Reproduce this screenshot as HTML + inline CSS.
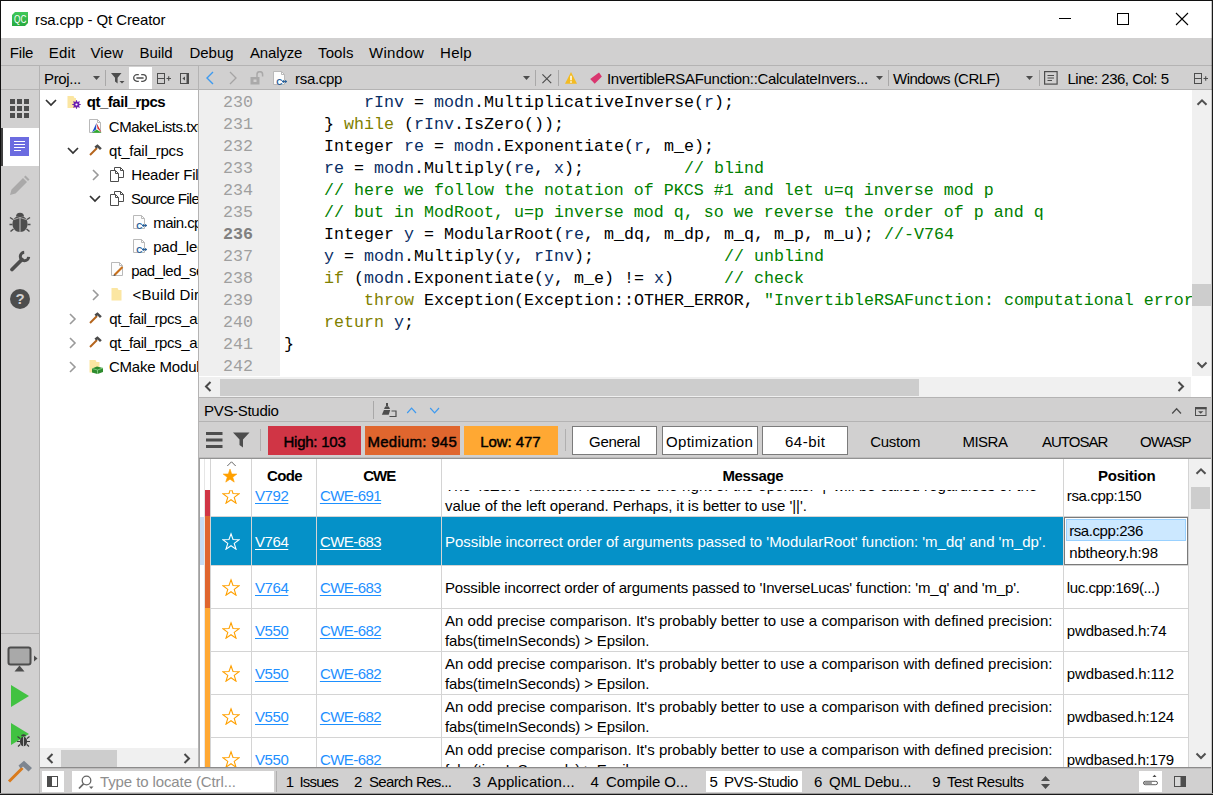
<!DOCTYPE html>
<html lang="en"><head><meta charset="utf-8"><title>rsa.cpp - Qt Creator</title>
<style>
html,body{margin:0;padding:0;}
body{width:1213px;height:795px;overflow:hidden;background:#fff;position:relative;font-family:"Liberation Sans",sans-serif;}
#r{position:absolute;left:0;top:0;width:1213px;height:795px;overflow:hidden;}
#r div,#r span,#r svg{position:absolute;}
.t{white-space:pre;line-height:20px;height:20px;}
.m{font-family:"Liberation Mono",monospace;}
.c{overflow:hidden;}
</style></head>
<body><div id="r">
<div style="left:0px;top:0px;width:1213px;height:795px;background:#fff;"></div>
<svg style="left:12px;top:12px;" width="16" height="14" viewBox="0 0 16 14"><defs><linearGradient id="qg" x1="0" y1="0" x2="0" y2="1"><stop offset="0" stop-color="#41c85a"/><stop offset="1" stop-color="#27aa40"/></linearGradient></defs><path d="M3 0H16V11L13 14H0V3Z" fill="url(#qg)"/><text x="8.2" y="10.7" font-family="Liberation Sans, sans-serif" font-size="10" fill="#fff" text-anchor="middle" textLength="12.3" lengthAdjust="spacingAndGlyphs">QC</text></svg>
<span class="t" style="left:35.0px;top:9.80px;font-size:15px;color:#000;letter-spacing:-0.102px;">rsa.cpp - Qt Creator</span>
<div style="left:1059px;top:18px;width:12px;height:1px;background:#000;"></div>
<div style="left:1117px;top:13px;width:12px;height:12px;background:transparent;border:1px solid #000;box-sizing:border-box;"></div>
<svg style="left:1175px;top:12px;" width="14" height="14" viewBox="0 0 14 14"><path d="M1 1L13 13M13 1L1 13" stroke="#000" stroke-width="1.1" fill="none"/></svg>
<div style="left:1px;top:38px;width:1211px;height:28px;background:#d1d0d0;"></div>
<div style="left:1px;top:65px;width:1211px;height:1px;background:#b4b3b3;"></div>
<span class="t" style="left:9.8px;top:42.80px;font-size:15px;color:#000;letter-spacing:-0.193px;">File</span>
<span class="t" style="left:48.8px;top:42.80px;font-size:15px;color:#000;letter-spacing:0.135px;">Edit</span>
<span class="t" style="left:90.5px;top:42.80px;font-size:15px;color:#000;letter-spacing:0.113px;">View</span>
<span class="t" style="left:139.5px;top:42.80px;font-size:15px;color:#000;letter-spacing:-0.072px;">Build</span>
<span class="t" style="left:189.5px;top:42.80px;font-size:15px;color:#000;letter-spacing:-0.041px;">Debug</span>
<span class="t" style="left:250.0px;top:42.80px;font-size:15px;color:#000;letter-spacing:-0.154px;">Analyze</span>
<span class="t" style="left:318.1px;top:42.80px;font-size:15px;color:#000;letter-spacing:0.074px;">Tools</span>
<span class="t" style="left:368.9px;top:42.80px;font-size:15px;color:#000;letter-spacing:0.340px;">Window</span>
<span class="t" style="left:440.1px;top:42.80px;font-size:15px;color:#000;letter-spacing:0.210px;">Help</span>
<div style="left:1px;top:66px;width:1211px;height:24px;background:#d1d0d0;"></div>
<div style="left:1px;top:89px;width:1211px;height:1px;background:#b4b3b3;"></div>
<div style="left:1px;top:90px;width:38px;height:704px;background:#d1d0d0;"></div>
<div style="left:39px;top:66px;width:1px;height:728px;background:#b4b3b3;"></div>
<svg style="left:10px;top:99px;" width="19" height="19" viewBox="0 0 19 19"><rect x="0" y="0" width="5" height="5" fill="#4d4d4d"/><rect x="0" y="7" width="5" height="5" fill="#4d4d4d"/><rect x="0" y="14" width="5" height="5" fill="#4d4d4d"/><rect x="7" y="0" width="5" height="5" fill="#4d4d4d"/><rect x="7" y="7" width="5" height="5" fill="#4d4d4d"/><rect x="7" y="14" width="5" height="5" fill="#4d4d4d"/><rect x="14" y="0" width="5" height="5" fill="#4d4d4d"/><rect x="14" y="7" width="5" height="5" fill="#4d4d4d"/><rect x="14" y="14" width="5" height="5" fill="#4d4d4d"/></svg>
<div style="left:1px;top:128px;width:38px;height:38px;background:#fff;"></div>
<div style="left:1px;top:128px;width:2px;height:38px;background:#404040;"></div>
<svg style="left:10px;top:137px;" width="19" height="19" viewBox="0 0 19 19"><rect width="19" height="19" fill="#6c6ce0"/><path d="M4 4.5H15M4 7.5H15M4 10.5H15M4 13.5H11" stroke="#fff" stroke-width="1.1"/></svg>
<svg style="left:9px;top:175px;" width="21" height="21" viewBox="0 0 21 21"><path d="M1 20L2.5 14.5L14 3L18 7L6.5 18.5Z M15 2L16.5 0.5L20.5 4.5L19 6Z" fill="#aaa9a9"/></svg>
<svg style="left:9px;top:212px;" width="22" height="22" viewBox="0 0 22 22"><path d="M4 7.500L1 5.500M18 7.500L21 5.500M3.500 12.500H0.500M18.500 12.500H21.500M4.500 17L1.500 19.500M17.500 17L20.500 19.500" stroke="#4d4d4d" stroke-width="1.500" fill="none"/><g fill="#4d4d4d"><path d="M11 4C16.500 4 18.500 8 18.500 12C18.500 16.500 15.500 20 11 20C6.500 20 3.500 16.500 3.500 12C3.500 8 5.500 4 11 4Z"/><path d="M7 4.500a4 3.800 0 0 1 8 0z"/></g><path d="M11 5.500V20" stroke="#d1d0d0" stroke-width="0.900"/><path d="M11 5.500L5 7.500M11 5.500L17 7.500" stroke="#d1d0d0" stroke-width="0.700"/></svg>
<svg style="left:9px;top:250px;" width="22" height="22" viewBox="0 0 22 22"><path d="M3 19.500L13 9.500" stroke="#4d4d4d" stroke-width="3.700" stroke-linecap="round" fill="none"/><path d="M19.700 6.800A4.200 4.200 0 1 1 15.200 2.300" stroke="#4d4d4d" stroke-width="3" fill="none"/></svg>
<svg style="left:10px;top:289px;" width="20" height="20" viewBox="0 0 20 20"><circle cx="10" cy="10" r="10" fill="#4d4d4d"/><text x="10" y="15.2" font-family="Liberation Sans, sans-serif" font-weight="700" font-size="15" fill="#d1d0d0" text-anchor="middle">?</text></svg>
<div style="left:1px;top:633px;width:38px;height:1px;background:#b4b3b3;"></div>
<svg style="left:7px;top:646px;" width="32" height="27" viewBox="0 0 32 27"><rect x="1.5" y="1.5" width="22" height="17" rx="2" fill="#a9a9a9" stroke="#4d4d4d" stroke-width="2"/><path d="M7.500 25.500L12.500 19.500L17.500 25.500Z" fill="#4d4d4d"/><path d="M27 9.500L30.500 12.500L27 15.500Z" fill="#4d4d4d"/></svg>
<svg style="left:11px;top:685px;" width="18" height="22" viewBox="0 0 18 22"><path d="M0 0L18 11L0 22Z" fill="#41c241"/></svg>
<svg style="left:11px;top:723px;" width="20" height="24" viewBox="0 0 20 24"><path d="M0 0L18 11L0 22Z" fill="#41c241"/><g fill="#3c3c3c"><ellipse cx="12.500" cy="18.500" rx="3.600" ry="4.800"/><path d="M10 13.200a2.500 2 0 0 1 5 0z"/></g><path d="M12.500 14V23.500" stroke="#d1d0d0" stroke-width="0.8"/><path d="M9 15.500L6.500 13.500M16 15.500L18.500 13.500M9 18.500H6M16 18.500H19M9.200 21.500L7 23.500M15.800 21.500L18 23.500" stroke="#3c3c3c" stroke-width="1.1" fill="none"/></svg>
<svg style="left:7px;top:760px;" width="26" height="24" viewBox="0 0 26 24"><path d="M2 21.500L15.500 8" stroke="#d97a1c" stroke-width="3"/><path d="M11.500 5.500L17 0.800L25 8L21.500 11.500L16 6.500L13.500 8.500Z" fill="#7d8590"/></svg>
<span class="t" style="left:44.0px;top:68.80px;font-size:15px;color:#000;letter-spacing:-0.327px;">Proj...</span>
<svg style="left:93px;top:76px;" width="7" height="4" viewBox="0 0 7 4"><path d="M0 0H7L3.500 4Z" fill="#4d4d4d"/></svg>
<div style="left:105px;top:70px;width:1px;height:16px;background:#a9a8a8;"></div>
<svg style="left:110.5px;top:73px;" width="14" height="11" viewBox="0 0 14 11"><path d="M0 0H10.500L6.600 4.800V10.500L4 8.500V4.800Z" fill="#4d4d4d"/><path d="M8.500 8H13.500L11 10.500Z" fill="#4d4d4d"/></svg>
<div style="left:129px;top:67px;width:23px;height:22px;background:#fff;"></div>
<svg style="left:133px;top:74px;" width="14" height="8" viewBox="0 0 14 8"><path d="M5.800 0.700H4a3.300 3.300 0 0 0 0 6.600H5.800M8.200 0.700H10a3.300 3.300 0 0 1 0 6.600H8.200" stroke="#4d4d4d" stroke-width="1.300" fill="none"/><path d="M3.400 4H10.600" stroke="#4d4d4d" stroke-width="1.500"/></svg>
<svg style="left:157px;top:73px;" width="15" height="11" viewBox="0 0 15 11"><rect x="0.500" y="0.500" width="7" height="10" fill="none" stroke="#4d4d4d"/><path d="M0.500 5.500H7.500" stroke="#4d4d4d"/><path d="M9.500 5.500H14M11.700 3.200V7.800" stroke="#4d4d4d" stroke-width="1.100"/></svg>
<svg style="left:180px;top:73px;" width="9" height="11" viewBox="0 0 9 11"><rect x="0.500" y="0.500" width="8" height="10" fill="none" stroke="#4d4d4d"/><rect x="6.500" y="0" width="2.500" height="11" fill="#4d4d4d"/><path d="M5 3.500V7.500L2.400 5.500Z" fill="#4d4d4d"/></svg>
<div style="left:40px;top:90px;width:158px;height:658px;background:#fff;"></div>
<div style="left:198px;top:66px;width:1px;height:702px;background:#b4b3b3;"></div>
<svg style="left:44.5px;top:99px;" width="12" height="8" viewBox="0 0 12 8"><path d="M1 1L6 6L11 1" stroke="#333" stroke-width="1.7" fill="none"/></svg>
<svg style="left:67px;top:95px;" width="14" height="14" viewBox="0 0 14 14"><path d="M0.500 1H6.500L7.500 3H9V13H0.500Z" fill="#fbe6a2"/><circle cx="9.500" cy="9.500" r="2.300" fill="none" stroke="#6a1fb0" stroke-width="1.300"/><path d="M9.500 5.300V13.700M5.300 9.500H13.700M6.500 6.500L12.500 12.500M12.500 6.500L6.500 12.500" stroke="#6a1fb0" stroke-width="1.1"/><circle cx="9.500" cy="9.500" r="1.100" fill="#fff"/></svg>
<span class="t" style="left:86.8px;top:92.30px;font-size:15px;color:#000;font-weight:700;letter-spacing:-0.484px;">qt_fail_rpcs</span>
<svg style="left:89px;top:119px;" width="14" height="15" viewBox="0 0 14 15"><path d="M0.500 0.500H8.500L11.500 3.500V13.500H0.500Z" fill="#fdfdfd" stroke="#b9b9b9"/><path d="M8.500 0.500V3.500H11.500" fill="none" stroke="#b9b9b9"/><path d="M7.500 4L3 13.500L7 10.500Z" fill="#1f4fc9"/><path d="M7.500 4L12.500 13.500L8.500 9.500Z" fill="#d62b2b"/><path d="M3 13.800H12.500L7.800 10.500Z" fill="#2faa2f"/></svg>
<div class="c" style="left:100px;top:115px;width:97.5px;height:24px">
<span class="t" style="left:8.8px;top:1.70px;font-size:15px;color:#000;letter-spacing:-0.462px;">CMakeLists.txt</span>
</div>
<svg style="left:66.5px;top:146.5px;" width="12" height="8" viewBox="0 0 12 8"><path d="M1 1L6 6L11 1" stroke="#333" stroke-width="1.7" fill="none"/></svg>
<svg style="left:89px;top:144px;" width="13" height="12" viewBox="0 0 13 12"><path d="M1 11L8 4" stroke="#b5651d" stroke-width="2"/><path d="M5.500 2.500L8.500 0.300L12.800 4.200L11 6L8.500 3.500L7 4.500Z" fill="#4a4a4a"/></svg>
<span class="t" style="left:109.1px;top:140.80px;font-size:15px;color:#000;letter-spacing:-0.218px;">qt_fail_rpcs</span>
<svg style="left:91.5px;top:168.5px;" width="8" height="12" viewBox="0 0 8 12"><path d="M1 1L6 6L1 11" stroke="#9a9a9a" stroke-width="1.6" fill="none"/></svg>
<svg style="left:110px;top:167px;" width="14" height="15" viewBox="0 0 14 15"><path d="M4.500 3.500V0.500H10.500L13.500 3.500V10.500H8.500" fill="#fff" stroke="#4d4d4d"/><path d="M10.500 0.500V3.500H13.500" fill="none" stroke="#4d4d4d"/><path d="M0.500 3.500H5.500L8.500 6.500V14.500H0.500Z" fill="#fff" stroke="#4d4d4d"/><path d="M5.500 3.500V6.500H8.500" fill="none" stroke="#4d4d4d"/></svg>
<div class="c" style="left:125px;top:163px;width:72.5px;height:24px">
<span class="t" style="left:6.3px;top:1.90px;font-size:15px;color:#000;letter-spacing:-0.200px;">Header Files</span>
</div>
<svg style="left:89px;top:194.5px;" width="12" height="8" viewBox="0 0 12 8"><path d="M1 1L6 6L11 1" stroke="#333" stroke-width="1.7" fill="none"/></svg>
<svg style="left:110px;top:191px;" width="14" height="15" viewBox="0 0 14 15"><path d="M4.500 3.500V0.500H10.500L13.500 3.500V10.500H8.500" fill="#fff" stroke="#4d4d4d"/><path d="M10.500 0.500V3.500H13.500" fill="none" stroke="#4d4d4d"/><path d="M0.500 3.500H5.500L8.500 6.500V14.500H0.500Z" fill="#fff" stroke="#4d4d4d"/><path d="M5.500 3.500V6.500H8.500" fill="none" stroke="#4d4d4d"/></svg>
<div class="c" style="left:125px;top:187px;width:72.5px;height:24px">
<span class="t" style="left:5.9px;top:1.90px;font-size:15px;color:#000;letter-spacing:-0.693px;">Source Files</span>
</div>
<svg style="left:133px;top:215px;" width="14" height="15" viewBox="0 0 14 15"><path d="M0.500 0.500H8.500L11.500 3.500V13.500H0.500Z" fill="#fdfdfd" stroke="#b9b9b9"/><path d="M8.500 0.500V3.500H11.500" fill="none" stroke="#b9b9b9"/><text x="3.200" y="13.500" font-family="Liberation Sans, sans-serif" font-weight="700" font-size="8.500" fill="#2a6099">C</text><path d="M9 10.500H14M10.300 9V12M12.700 9V12" stroke="#2a6099" stroke-width="1"/></svg>
<div class="c" style="left:148px;top:211px;width:49.5px;height:24px">
<span class="t" style="left:5.2px;top:1.90px;font-size:15px;color:#000;letter-spacing:-0.548px;">main.cpp</span>
</div>
<svg style="left:133px;top:239px;" width="14" height="15" viewBox="0 0 14 15"><path d="M0.500 0.500H8.500L11.500 3.500V13.500H0.500Z" fill="#fdfdfd" stroke="#b9b9b9"/><path d="M8.500 0.500V3.500H11.500" fill="none" stroke="#b9b9b9"/><text x="3.200" y="13.500" font-family="Liberation Sans, sans-serif" font-weight="700" font-size="8.500" fill="#2a6099">C</text><path d="M9 10.500H14M10.300 9V12M12.700 9V12" stroke="#2a6099" stroke-width="1"/></svg>
<div class="c" style="left:148px;top:235px;width:49.5px;height:24px">
<span class="t" style="left:5.2px;top:1.70px;font-size:15px;color:#000;letter-spacing:-0.181px;">pad_led.cpp</span>
</div>
<svg style="left:111px;top:262px;" width="14" height="16" viewBox="0 0 14 16"><path d="M0.500 0.500H8.500L11.500 3.500V13.500H0.500Z" fill="#fdfdfd" stroke="#b9b9b9"/><path d="M8.500 0.500V3.500H11.500" fill="none" stroke="#b9b9b9"/><path d="M3.500 13L11.500 5" stroke="#c8701c" stroke-width="2.200"/><path d="M2.500 14L3 12L4.500 13.500Z" fill="#4d4d4d"/></svg>
<div class="c" style="left:125px;top:259px;width:72.5px;height:24px">
<span class="t" style="left:6.2px;top:1.70px;font-size:15px;color:#000;letter-spacing:-0.504px;">pad_led_sensor.ui</span>
</div>
<svg style="left:91.5px;top:288.5px;" width="8" height="12" viewBox="0 0 8 12"><path d="M1 1L6 6L1 11" stroke="#9a9a9a" stroke-width="1.6" fill="none"/></svg>
<svg style="left:111px;top:287px;" width="11" height="14" viewBox="0 0 11 14"><path d="M0.500 1H6.500L7.500 3H10.500V13.500H0.500Z" fill="#fbe6a2"/></svg>
<div class="c" style="left:125px;top:283px;width:72.5px;height:24px">
<span class="t" style="left:7.5px;top:1.90px;font-size:15px;color:#000;letter-spacing:0.116px;">&lt;Build Directory&gt;</span>
</div>
<svg style="left:69px;top:312.5px;" width="8" height="12" viewBox="0 0 8 12"><path d="M1 1L6 6L1 11" stroke="#9a9a9a" stroke-width="1.6" fill="none"/></svg>
<svg style="left:89px;top:312px;" width="13" height="12" viewBox="0 0 13 12"><path d="M1 11L8 4" stroke="#b5651d" stroke-width="2"/><path d="M5.500 2.500L8.500 0.300L12.800 4.200L11 6L8.500 3.500L7 4.500Z" fill="#4a4a4a"/></svg>
<div class="c" style="left:100px;top:307px;width:97.5px;height:24px">
<span class="t" style="left:9.3px;top:1.90px;font-size:15px;color:#000;letter-spacing:-0.397px;">qt_fail_rpcs_autogen</span>
</div>
<svg style="left:69px;top:336.5px;" width="8" height="12" viewBox="0 0 8 12"><path d="M1 1L6 6L1 11" stroke="#9a9a9a" stroke-width="1.6" fill="none"/></svg>
<svg style="left:89px;top:336px;" width="13" height="12" viewBox="0 0 13 12"><path d="M1 11L8 4" stroke="#b5651d" stroke-width="2"/><path d="M5.500 2.500L8.500 0.300L12.800 4.200L11 6L8.500 3.500L7 4.500Z" fill="#4a4a4a"/></svg>
<div class="c" style="left:100px;top:331px;width:97.5px;height:24px">
<span class="t" style="left:9.3px;top:1.90px;font-size:15px;color:#000;letter-spacing:-0.397px;">qt_fail_rpcs_autogen</span>
</div>
<svg style="left:69px;top:360.5px;" width="8" height="12" viewBox="0 0 8 12"><path d="M1 1L6 6L1 11" stroke="#9a9a9a" stroke-width="1.6" fill="none"/></svg>
<svg style="left:89px;top:359px;" width="15" height="15" viewBox="0 0 15 15"><path d="M0.500 1H6.500L7.500 3H10.500V13.500H0.500Z" fill="#fbe6a2"/><path d="M3 9.500L8 7.500L14 9V13L8.500 15L3 13.500Z" fill="#2e8b2e"/><path d="M3 9.500L8.500 11L14 9M8.500 11V15" stroke="#8fd68f" stroke-width="0.800" fill="none"/></svg>
<div class="c" style="left:100px;top:355px;width:97.5px;height:24px">
<span class="t" style="left:8.9px;top:1.90px;font-size:15px;color:#000;letter-spacing:-0.180px;">CMake Modules</span>
</div>
<div style="left:40px;top:748px;width:158px;height:20px;background:#f0f0f0;"></div>
<div style="left:61px;top:750px;width:56px;height:17px;background:#cdcdcd;"></div>
<svg style="left:46px;top:752.5px;" width="8" height="11" viewBox="0 0 8 11"><path d="M6.500 1L2 5.500L6.500 10" stroke="#484848" stroke-width="2" fill="none"/></svg>
<svg style="left:183px;top:752.5px;" width="8" height="11" viewBox="0 0 8 11"><path d="M1.500 1L6 5.500L1.500 10" stroke="#484848" stroke-width="2" fill="none"/></svg>
<svg style="left:205px;top:71px;" width="10" height="14" viewBox="0 0 10 14"><path d="M8 1L2 7L8 13" stroke="#3d9af0" stroke-width="1.400" fill="none"/></svg>
<svg style="left:228px;top:71px;" width="10" height="14" viewBox="0 0 10 14"><path d="M2 1L8 7L2 13" stroke="#a5a4a4" stroke-width="1.300" fill="none"/></svg>
<svg style="left:250px;top:71px;" width="14" height="14" viewBox="0 0 14 14"><rect x="0.500" y="6" width="9" height="7.500" fill="#aaa9a9"/><rect x="3.500" y="8.500" width="3" height="2.500" fill="#d1d0d0"/><path d="M7 6V3.500a2.800 2.800 0 0 1 5.600 0V5.500" stroke="#aaa9a9" stroke-width="1.500" fill="none"/></svg>
<svg style="left:273px;top:71px;" width="14" height="15" viewBox="0 0 14 15"><path d="M0.500 0.500H8.500L11.500 3.500V13.500H0.500Z" fill="#fdfdfd" stroke="#b9b9b9"/><path d="M8.500 0.500V3.500H11.500" fill="none" stroke="#b9b9b9"/><text x="3.200" y="13.500" font-family="Liberation Sans, sans-serif" font-weight="700" font-size="8.500" fill="#2a6099">C</text><path d="M9 10.500H14M10.300 9V12M12.700 9V12" stroke="#2a6099" stroke-width="1"/></svg>
<span class="t" style="left:295.1px;top:68.80px;font-size:15px;color:#000;letter-spacing:-0.343px;">rsa.cpp</span>
<svg style="left:523px;top:76px;" width="7" height="4" viewBox="0 0 7 4"><path d="M0 0H7L3.500 4Z" fill="#4d4d4d"/></svg>
<div style="left:535px;top:70px;width:1px;height:16px;background:#a9a8a8;"></div>
<svg style="left:542px;top:73.5px;" width="10" height="10" viewBox="0 0 10 10"><path d="M0.400 0.400L9.200 9.200M9.200 0.400L0.400 9.200" stroke="#4d4d4d" stroke-width="1.200" fill="none"/></svg>
<div style="left:558px;top:70px;width:1px;height:16px;background:#a9a8a8;"></div>
<svg style="left:564.8px;top:72px;" width="12" height="12" viewBox="0 0 12 12"><path d="M6 0L12 11.700H0Z" fill="#f3bb22"/><path d="M6 3.800V8.200M6 9.200V10.700" stroke="#fff" stroke-width="1.500"/></svg>
<svg style="left:590px;top:72px;" width="13" height="12" viewBox="0 0 13 12"><path d="M9 0.400L11.900 4.500L4.700 11.700L0.200 7Z" fill="#d9366f"/></svg>
<span class="t" style="left:607.0px;top:68.80px;font-size:15px;color:#000;letter-spacing:-0.307px;">InvertibleRSAFunction::CalculateInvers...</span>
<svg style="left:876px;top:76px;" width="7" height="4" viewBox="0 0 7 4"><path d="M0 0H7L3.500 4Z" fill="#4d4d4d"/></svg>
<div style="left:888px;top:70px;width:1px;height:16px;background:#a9a8a8;"></div>
<span class="t" style="left:893.1px;top:68.80px;font-size:15px;color:#000;letter-spacing:-0.556px;">Windows (CRLF)</span>
<svg style="left:1026px;top:76px;" width="7" height="4" viewBox="0 0 7 4"><path d="M0 0H7L3.500 4Z" fill="#4d4d4d"/></svg>
<div style="left:1039px;top:70px;width:1px;height:16px;background:#a9a8a8;"></div>
<svg style="left:1044px;top:71px;" width="14" height="14" viewBox="0 0 14 14"><rect x="0.600" y="0.600" width="12.500" height="12.500" fill="none" stroke="#4d4d4d" stroke-width="1.200"/><path d="M3.500 4.500H10M3.500 7H10M3.500 9.500H8" stroke="#4d4d4d" stroke-width="1"/></svg>
<span class="t" style="left:1067.5px;top:68.80px;font-size:15px;color:#000;letter-spacing:-0.485px;">Line: 236, Col: 5</span>
<svg style="left:1194px;top:73px;" width="15" height="11" viewBox="0 0 15 11"><rect x="0.500" y="0.500" width="7" height="10" fill="none" stroke="#4d4d4d"/><path d="M0.500 5.500H7.500" stroke="#4d4d4d"/><path d="M9.500 5.500H14M11.700 3.200V7.800" stroke="#4d4d4d" stroke-width="1.100"/></svg>
<div style="left:199px;top:90px;width:81px;height:286px;background:#efefef;"></div>
<div style="left:280px;top:90px;width:913px;height:286px;background:#fff;"></div>
<div class="c" style="left:199px;top:90px;width:994px;height:286px">
<span class="t m" style="left:24px;top:3px;font-size:16.667px;color:#9f9f9f;">230</span>
<span class="t m" style="left:165px;top:3px;font-size:16.667px;color:#092e64;">rInv</span>
<span class="t m" style="left:215px;top:3px;font-size:16.667px;color:#000;">= </span>
<span class="t m" style="left:235px;top:3px;font-size:16.667px;color:#092e64;">modn</span>
<span class="t m" style="left:275px;top:3px;font-size:16.667px;color:#000;">.MultiplicativeInverse(</span>
<span class="t m" style="left:505px;top:3px;font-size:16.667px;color:#092e64;">r</span>
<span class="t m" style="left:515px;top:3px;font-size:16.667px;color:#000;">);</span>
<span class="t m" style="left:24px;top:25px;font-size:16.667px;color:#9f9f9f;">231</span>
<span class="t m" style="left:125px;top:25px;font-size:16.667px;color:#000;">} </span>
<span class="t m" style="left:145px;top:25px;font-size:16.667px;color:#808000;">while</span>
<span class="t m" style="left:205px;top:25px;font-size:16.667px;color:#000;">(</span>
<span class="t m" style="left:215px;top:25px;font-size:16.667px;color:#092e64;">rInv</span>
<span class="t m" style="left:255px;top:25px;font-size:16.667px;color:#000;">.IsZero());</span>
<span class="t m" style="left:24px;top:47px;font-size:16.667px;color:#9f9f9f;">232</span>
<span class="t m" style="left:125px;top:47px;font-size:16.667px;color:#000;">Integer </span>
<span class="t m" style="left:205px;top:47px;font-size:16.667px;color:#092e64;">re</span>
<span class="t m" style="left:235px;top:47px;font-size:16.667px;color:#000;">= </span>
<span class="t m" style="left:255px;top:47px;font-size:16.667px;color:#092e64;">modn</span>
<span class="t m" style="left:295px;top:47px;font-size:16.667px;color:#000;">.Exponentiate(</span>
<span class="t m" style="left:435px;top:47px;font-size:16.667px;color:#092e64;">r</span>
<span class="t m" style="left:445px;top:47px;font-size:16.667px;color:#000;">, m_e);</span>
<span class="t m" style="left:24px;top:69px;font-size:16.667px;color:#9f9f9f;">233</span>
<span class="t m" style="left:125px;top:69px;font-size:16.667px;color:#092e64;">re</span>
<span class="t m" style="left:155px;top:69px;font-size:16.667px;color:#000;">= </span>
<span class="t m" style="left:175px;top:69px;font-size:16.667px;color:#092e64;">modn</span>
<span class="t m" style="left:215px;top:69px;font-size:16.667px;color:#000;">.Multiply(</span>
<span class="t m" style="left:315px;top:69px;font-size:16.667px;color:#092e64;">re</span>
<span class="t m" style="left:335px;top:69px;font-size:16.667px;color:#000;">, </span>
<span class="t m" style="left:355px;top:69px;font-size:16.667px;color:#092e64;">x</span>
<span class="t m" style="left:365px;top:69px;font-size:16.667px;color:#000;">);</span>
<span class="t m" style="left:485px;top:69px;font-size:16.667px;color:#008000;">// blind</span>
<span class="t m" style="left:24px;top:91px;font-size:16.667px;color:#9f9f9f;">234</span>
<span class="t m" style="left:125px;top:91px;font-size:16.667px;color:#008000;">// here we follow the notation of PKCS #1 and let u=q inverse mod p</span>
<span class="t m" style="left:24px;top:113px;font-size:16.667px;color:#9f9f9f;">235</span>
<span class="t m" style="left:125px;top:113px;font-size:16.667px;color:#008000;">// but in ModRoot, u=p inverse mod q, so we reverse the order of p and q</span>
<span class="t m" style="left:24px;top:135px;font-size:16.667px;color:#808080;font-weight:700;">236</span>
<span class="t m" style="left:125px;top:135px;font-size:16.667px;color:#000;">Integer </span>
<span class="t m" style="left:205px;top:135px;font-size:16.667px;color:#092e64;">y</span>
<span class="t m" style="left:225px;top:135px;font-size:16.667px;color:#000;">= ModularRoot(</span>
<span class="t m" style="left:365px;top:135px;font-size:16.667px;color:#092e64;">re</span>
<span class="t m" style="left:385px;top:135px;font-size:16.667px;color:#000;">, m_dq, m_dp, m_q, m_p, m_u); </span>
<span class="t m" style="left:685px;top:135px;font-size:16.667px;color:#008000;">//-V764</span>
<span class="t m" style="left:24px;top:157px;font-size:16.667px;color:#9f9f9f;">237</span>
<span class="t m" style="left:125px;top:157px;font-size:16.667px;color:#092e64;">y</span>
<span class="t m" style="left:145px;top:157px;font-size:16.667px;color:#000;">= </span>
<span class="t m" style="left:165px;top:157px;font-size:16.667px;color:#092e64;">modn</span>
<span class="t m" style="left:205px;top:157px;font-size:16.667px;color:#000;">.Multiply(</span>
<span class="t m" style="left:305px;top:157px;font-size:16.667px;color:#092e64;">y</span>
<span class="t m" style="left:315px;top:157px;font-size:16.667px;color:#000;">, </span>
<span class="t m" style="left:335px;top:157px;font-size:16.667px;color:#092e64;">rInv</span>
<span class="t m" style="left:375px;top:157px;font-size:16.667px;color:#000;">);</span>
<span class="t m" style="left:525px;top:157px;font-size:16.667px;color:#008000;">// unblind</span>
<span class="t m" style="left:24px;top:179px;font-size:16.667px;color:#9f9f9f;">238</span>
<span class="t m" style="left:125px;top:179px;font-size:16.667px;color:#808000;">if</span>
<span class="t m" style="left:155px;top:179px;font-size:16.667px;color:#000;">(</span>
<span class="t m" style="left:165px;top:179px;font-size:16.667px;color:#092e64;">modn</span>
<span class="t m" style="left:205px;top:179px;font-size:16.667px;color:#000;">.Exponentiate(</span>
<span class="t m" style="left:345px;top:179px;font-size:16.667px;color:#092e64;">y</span>
<span class="t m" style="left:355px;top:179px;font-size:16.667px;color:#000;">, m_e) != </span>
<span class="t m" style="left:455px;top:179px;font-size:16.667px;color:#092e64;">x</span>
<span class="t m" style="left:465px;top:179px;font-size:16.667px;color:#000;">)</span>
<span class="t m" style="left:525px;top:179px;font-size:16.667px;color:#008000;">// check</span>
<span class="t m" style="left:24px;top:201px;font-size:16.667px;color:#9f9f9f;">239</span>
<span class="t m" style="left:165px;top:201px;font-size:16.667px;color:#808000;">throw</span>
<span class="t m" style="left:225px;top:201px;font-size:16.667px;color:#000;">Exception(Exception::OTHER_ERROR, </span>
<span class="t m" style="left:565px;top:201px;font-size:16.667px;color:#008000;">"InvertibleRSAFunction: computational error"</span>
<span class="t m" style="left:24px;top:223px;font-size:16.667px;color:#9f9f9f;">240</span>
<span class="t m" style="left:125px;top:223px;font-size:16.667px;color:#808000;">return</span>
<span class="t m" style="left:195px;top:223px;font-size:16.667px;color:#092e64;">y</span>
<span class="t m" style="left:205px;top:223px;font-size:16.667px;color:#000;">;</span>
<span class="t m" style="left:24px;top:245px;font-size:16.667px;color:#9f9f9f;">241</span>
<span class="t m" style="left:85px;top:245px;font-size:16.667px;color:#000;">}</span>
<span class="t m" style="left:24px;top:267px;font-size:16.667px;color:#9f9f9f;">242</span>
</div>
<div style="left:1192px;top:90px;width:19px;height:286px;background:#f0f0f0;"></div>
<div style="left:1192px;top:284px;width:19px;height:22px;background:#cdcdcd;"></div>
<svg style="left:1196px;top:98px;" width="12" height="8" viewBox="0 0 12 8"><path d="M1.500 6.800L6 2.300L10.500 6.800" stroke="#505050" stroke-width="2" fill="none"/></svg>
<svg style="left:1196px;top:361px;" width="12" height="8" viewBox="0 0 12 8"><path d="M1.500 1.500L6 6L10.500 1.500" stroke="#505050" stroke-width="2" fill="none"/></svg>
<div style="left:199px;top:377px;width:992px;height:20px;background:#f0f0f0;"></div>
<div style="left:220px;top:379px;width:699px;height:17px;background:#cdcdcd;"></div>
<svg style="left:204px;top:381px;" width="8" height="11" viewBox="0 0 8 11"><path d="M6.500 1L2 5.500L6.500 10" stroke="#484848" stroke-width="2" fill="none"/></svg>
<svg style="left:1177px;top:381px;" width="8" height="11" viewBox="0 0 8 11"><path d="M1.500 1L6 5.500L1.500 10" stroke="#484848" stroke-width="2" fill="none"/></svg>
<div style="left:1191px;top:376px;width:20px;height:21px;background:#fff;"></div>
<div style="left:199px;top:397px;width:1012px;height:1px;background:#b4b3b3;"></div>
<div style="left:199px;top:398px;width:1012px;height:24px;background:#d1d0d0;"></div>
<div style="left:199px;top:421px;width:1012px;height:1px;background:#b4b3b3;"></div>
<span class="t" style="left:204.0px;top:401.10px;font-size:15px;color:#000;letter-spacing:-0.305px;">PVS-Studio</span>
<div style="left:373px;top:401px;width:1px;height:18px;background:#a9a8a8;"></div>
<svg style="left:381px;top:402px;" width="16" height="16" viewBox="0 0 16 16"><path d="M5 1H7V4.500H5Z" fill="#4d4d4d"/><path d="M4.200 4.500H7.800L9 7H3Z" fill="#4d4d4d"/><path d="M2.900 7.900H9.200L7.700 12.700H0.900Z" fill="#4d4d4d"/><path d="M10.500 9H15V14.500H8.500" fill="none" stroke="#4d4d4d" stroke-width="1.200"/></svg>
<svg style="left:406px;top:406px;" width="12" height="9" viewBox="0 0 12 9"><path d="M1.200 7L5.600 2.200L10 7" stroke="#3d9af0" stroke-width="1.200" fill="none"/></svg>
<svg style="left:429px;top:406px;" width="12" height="9" viewBox="0 0 12 9"><path d="M1.200 2L5.600 6.800L10 2" stroke="#3d9af0" stroke-width="1.200" fill="none"/></svg>
<svg style="left:1171px;top:406.5px;" width="12" height="8" viewBox="0 0 12 8"><path d="M1.200 6.500L5.600 1.800L10 6.500" stroke="#4d4d4d" stroke-width="1.300" fill="none"/></svg>
<svg style="left:1195px;top:407px;" width="12" height="10" viewBox="0 0 12 10"><rect x="0.500" y="0.500" width="10.500" height="8" fill="none" stroke="#4d4d4d"/><rect x="0" y="0" width="11.500" height="2.300" fill="#4d4d4d"/><path d="M3 4.300H8.400L5.700 6.800Z" fill="#4d4d4d"/></svg>
<div style="left:199px;top:422px;width:1012px;height:36px;background:#d1d0d0;"></div>
<div style="left:199px;top:457px;width:1012px;height:1px;background:#bdbcbc;"></div>
<div style="left:199px;top:458px;width:1012px;height:2px;background:#939393;"></div>
<svg style="left:206px;top:432px;" width="17" height="16" viewBox="0 0 17 16"><path d="M0 1.500H16.500M0 8H16.500M0 14.500H16.500" stroke="#4d4d4d" stroke-width="3"/></svg>
<svg style="left:233px;top:432px;" width="17" height="16" viewBox="0 0 17 16"><path d="M0 0.500H16.500L10 7.500V15.500L6.500 13V7.500Z" fill="#4d4d4d"/></svg>
<div style="left:260px;top:429px;width:1px;height:22px;background:#b0afaf;"></div>
<div style="left:268px;top:426px;width:93px;height:29px;background:#d03545;"></div>
<span class="t" style="left:283.5px;top:431.80px;font-size:15px;color:#000;letter-spacing:-0.247px;-webkit-text-stroke:0.45px #000;">High: 103</span>
<div style="left:365px;top:426px;width:95px;height:29px;background:#e0662e;"></div>
<span class="t" style="left:367.5px;top:431.80px;font-size:15px;color:#000;letter-spacing:0.253px;-webkit-text-stroke:0.45px #000;">Medium: 945</span>
<div style="left:464px;top:426px;width:94px;height:29px;background:#ffa833;"></div>
<span class="t" style="left:480.2px;top:431.80px;font-size:15px;color:#000;letter-spacing:-0.074px;-webkit-text-stroke:0.45px #000;">Low: 477</span>
<div style="left:565px;top:429px;width:1px;height:22px;background:#b0afaf;"></div>
<div style="left:572px;top:426px;width:85px;height:29px;background:#fff;border:1px solid #7b7b7b;box-sizing:border-box;"></div>
<span class="t" style="left:589.1px;top:431.80px;font-size:15px;color:#000;letter-spacing:-0.339px;">General</span>
<div style="left:662px;top:426px;width:96px;height:29px;background:#fff;border:1px solid #7b7b7b;box-sizing:border-box;"></div>
<span class="t" style="left:666.0px;top:431.80px;font-size:15px;color:#000;letter-spacing:0.310px;">Optimization</span>
<div style="left:762px;top:426px;width:86px;height:29px;background:#fff;border:1px solid #7b7b7b;box-sizing:border-box;"></div>
<span class="t" style="left:785.0px;top:431.80px;font-size:15px;color:#000;letter-spacing:0.495px;">64-bit</span>
<span class="t" style="left:870.2px;top:431.80px;font-size:15px;color:#000;letter-spacing:-0.281px;">Custom</span>
<span class="t" style="left:962.5px;top:431.80px;font-size:15px;color:#000;letter-spacing:-0.523px;">MISRA</span>
<span class="t" style="left:1041.9px;top:431.80px;font-size:15px;color:#000;letter-spacing:-0.950px;">AUTOSAR</span>
<span class="t" style="left:1140.1px;top:431.80px;font-size:15px;color:#000;letter-spacing:-0.979px;">OWASP</span>
<div style="left:199px;top:460px;width:990px;height:307px;background:#fff;"></div>
<div class="c" style="left:199px;top:459px;width:990px;height:308px">
<div style="left:6px;top:14px;width:5px;height:43px;background:#d03545;"></div>
<svg style="left:22.5px;top:27.0px;" width="18" height="18" viewBox="0 0 18 18"><polygon points="9.00,1.80 11.00,7.55 17.08,7.67 12.23,11.35 14.00,17.18 9.00,13.70 4.00,17.18 5.77,11.35 0.92,7.67 7.00,7.55" fill="none" stroke="#ffa000" stroke-width="1.1" stroke-linejoin="miter"/></svg>
<span class="t" style="left:56.0px;top:26.50px;font-size:15px;color:#1e90ff;letter-spacing:-0.437px;text-decoration:underline;text-underline-offset:1.5px;text-decoration-thickness:1px;">V792</span>
<span class="t" style="left:120.9px;top:26.50px;font-size:15px;color:#1e90ff;letter-spacing:-0.547px;text-decoration:underline;text-underline-offset:1.5px;text-decoration-thickness:1px;">CWE-691</span>
<span class="t" style="left:246.0px;top:16.60px;font-size:15px;color:#000;letter-spacing:0.098px;">The 'IsZero' function located to the right of the operator '|' will be called regardless of the</span>
<span class="t" style="left:246.0px;top:36.50px;font-size:15px;color:#000;letter-spacing:-0.059px;">value of the left operand. Perhaps, it is better to use '||'.</span>
<span class="t" style="left:867.8px;top:26.50px;font-size:15px;color:#000;letter-spacing:-0.354px;">rsa.cpp:150</span>
<div style="left:12px;top:57px;width:978px;height:1px;background:#d4d4d4;"></div>
<div style="left:0px;top:58px;width:6px;height:48px;background:#c7dcf3;"></div>
<div style="left:12px;top:58px;width:853px;height:48px;background:#0591c8;"></div>
<div style="left:6px;top:57px;width:5px;height:49px;background:#e0662e;"></div>
<svg style="left:22.5px;top:73.0px;" width="18" height="18" viewBox="0 0 18 18"><polygon points="9.00,1.80 11.00,7.55 17.08,7.67 12.23,11.35 14.00,17.18 9.00,13.70 4.00,17.18 5.77,11.35 0.92,7.67 7.00,7.55" fill="none" stroke="#fff" stroke-width="1.1" stroke-linejoin="miter"/></svg>
<span class="t" style="left:56.0px;top:72.50px;font-size:15px;color:#fff;letter-spacing:-0.437px;text-decoration:underline;text-underline-offset:1.5px;text-decoration-thickness:1px;">V764</span>
<span class="t" style="left:120.9px;top:72.50px;font-size:15px;color:#fff;letter-spacing:-0.547px;text-decoration:underline;text-underline-offset:1.5px;text-decoration-thickness:1px;">CWE-683</span>
<span class="t" style="left:246.0px;top:72.50px;font-size:15px;color:#fff;letter-spacing:-0.028px;">Possible incorrect order of arguments passed to 'ModularRoot' function: 'm_dq' and 'm_dp'.</span>
<div style="left:12px;top:106px;width:978px;height:1px;background:#d4d4d4;"></div>
<div style="left:6px;top:106px;width:5px;height:43px;background:#e0662e;"></div>
<svg style="left:22.5px;top:119.0px;" width="18" height="18" viewBox="0 0 18 18"><polygon points="9.00,1.80 11.00,7.55 17.08,7.67 12.23,11.35 14.00,17.18 9.00,13.70 4.00,17.18 5.77,11.35 0.92,7.67 7.00,7.55" fill="none" stroke="#ffa000" stroke-width="1.1" stroke-linejoin="miter"/></svg>
<span class="t" style="left:56.0px;top:118.50px;font-size:15px;color:#1e90ff;letter-spacing:-0.437px;text-decoration:underline;text-underline-offset:1.5px;text-decoration-thickness:1px;">V764</span>
<span class="t" style="left:120.9px;top:118.50px;font-size:15px;color:#1e90ff;letter-spacing:-0.547px;text-decoration:underline;text-underline-offset:1.5px;text-decoration-thickness:1px;">CWE-683</span>
<span class="t" style="left:246.0px;top:118.50px;font-size:15px;color:#000;letter-spacing:-0.170px;">Possible incorrect order of arguments passed to 'InverseLucas' function: 'm_q' and 'm_p'.</span>
<span class="t" style="left:867.8px;top:118.50px;font-size:15px;color:#000;letter-spacing:-0.414px;">luc.cpp:169(...)</span>
<div style="left:12px;top:149px;width:978px;height:1px;background:#d4d4d4;"></div>
<div style="left:6px;top:149px;width:5px;height:43px;background:#ffa833;"></div>
<svg style="left:22.5px;top:162.0px;" width="18" height="18" viewBox="0 0 18 18"><polygon points="9.00,1.80 11.00,7.55 17.08,7.67 12.23,11.35 14.00,17.18 9.00,13.70 4.00,17.18 5.77,11.35 0.92,7.67 7.00,7.55" fill="none" stroke="#ffa000" stroke-width="1.1" stroke-linejoin="miter"/></svg>
<span class="t" style="left:56.0px;top:161.50px;font-size:15px;color:#1e90ff;letter-spacing:-0.437px;text-decoration:underline;text-underline-offset:1.5px;text-decoration-thickness:1px;">V550</span>
<span class="t" style="left:120.9px;top:161.50px;font-size:15px;color:#1e90ff;letter-spacing:-0.547px;text-decoration:underline;text-underline-offset:1.5px;text-decoration-thickness:1px;">CWE-682</span>
<span class="t" style="left:246.0px;top:151.60px;font-size:15px;color:#000;letter-spacing:0.029px;">An odd precise comparison. It's probably better to use a comparison with defined precision:</span>
<span class="t" style="left:246.0px;top:171.50px;font-size:15px;color:#000;letter-spacing:-0.128px;">fabs(timeInSeconds) &gt; Epsilon.</span>
<span class="t" style="left:867.8px;top:161.50px;font-size:15px;color:#000;letter-spacing:-0.158px;">pwdbased.h:74</span>
<div style="left:12px;top:192px;width:978px;height:1px;background:#d4d4d4;"></div>
<div style="left:6px;top:192px;width:5px;height:43px;background:#ffa833;"></div>
<svg style="left:22.5px;top:205.0px;" width="18" height="18" viewBox="0 0 18 18"><polygon points="9.00,1.80 11.00,7.55 17.08,7.67 12.23,11.35 14.00,17.18 9.00,13.70 4.00,17.18 5.77,11.35 0.92,7.67 7.00,7.55" fill="none" stroke="#ffa000" stroke-width="1.1" stroke-linejoin="miter"/></svg>
<span class="t" style="left:56.0px;top:204.50px;font-size:15px;color:#1e90ff;letter-spacing:-0.437px;text-decoration:underline;text-underline-offset:1.5px;text-decoration-thickness:1px;">V550</span>
<span class="t" style="left:120.9px;top:204.50px;font-size:15px;color:#1e90ff;letter-spacing:-0.547px;text-decoration:underline;text-underline-offset:1.5px;text-decoration-thickness:1px;">CWE-682</span>
<span class="t" style="left:246.0px;top:194.60px;font-size:15px;color:#000;letter-spacing:0.029px;">An odd precise comparison. It's probably better to use a comparison with defined precision:</span>
<span class="t" style="left:246.0px;top:214.50px;font-size:15px;color:#000;letter-spacing:-0.128px;">fabs(timeInSeconds) &gt; Epsilon.</span>
<span class="t" style="left:867.8px;top:204.50px;font-size:15px;color:#000;letter-spacing:-0.127px;">pwdbased.h:112</span>
<div style="left:12px;top:235px;width:978px;height:1px;background:#d4d4d4;"></div>
<div style="left:6px;top:235px;width:5px;height:43px;background:#ffa833;"></div>
<svg style="left:22.5px;top:248.0px;" width="18" height="18" viewBox="0 0 18 18"><polygon points="9.00,1.80 11.00,7.55 17.08,7.67 12.23,11.35 14.00,17.18 9.00,13.70 4.00,17.18 5.77,11.35 0.92,7.67 7.00,7.55" fill="none" stroke="#ffa000" stroke-width="1.1" stroke-linejoin="miter"/></svg>
<span class="t" style="left:56.0px;top:247.50px;font-size:15px;color:#1e90ff;letter-spacing:-0.437px;text-decoration:underline;text-underline-offset:1.5px;text-decoration-thickness:1px;">V550</span>
<span class="t" style="left:120.9px;top:247.50px;font-size:15px;color:#1e90ff;letter-spacing:-0.547px;text-decoration:underline;text-underline-offset:1.5px;text-decoration-thickness:1px;">CWE-682</span>
<span class="t" style="left:246.0px;top:237.60px;font-size:15px;color:#000;letter-spacing:0.029px;">An odd precise comparison. It's probably better to use a comparison with defined precision:</span>
<span class="t" style="left:246.0px;top:257.50px;font-size:15px;color:#000;letter-spacing:-0.128px;">fabs(timeInSeconds) &gt; Epsilon.</span>
<span class="t" style="left:867.8px;top:247.50px;font-size:15px;color:#000;letter-spacing:-0.207px;">pwdbased.h:124</span>
<div style="left:12px;top:278px;width:978px;height:1px;background:#d4d4d4;"></div>
<div style="left:6px;top:278px;width:5px;height:43px;background:#ffa833;"></div>
<svg style="left:22.5px;top:291.0px;" width="18" height="18" viewBox="0 0 18 18"><polygon points="9.00,1.80 11.00,7.55 17.08,7.67 12.23,11.35 14.00,17.18 9.00,13.70 4.00,17.18 5.77,11.35 0.92,7.67 7.00,7.55" fill="none" stroke="#ffa000" stroke-width="1.1" stroke-linejoin="miter"/></svg>
<span class="t" style="left:56.0px;top:290.50px;font-size:15px;color:#1e90ff;letter-spacing:-0.437px;text-decoration:underline;text-underline-offset:1.5px;text-decoration-thickness:1px;">V550</span>
<span class="t" style="left:120.9px;top:290.50px;font-size:15px;color:#1e90ff;letter-spacing:-0.547px;text-decoration:underline;text-underline-offset:1.5px;text-decoration-thickness:1px;">CWE-682</span>
<span class="t" style="left:246.0px;top:280.60px;font-size:15px;color:#000;letter-spacing:0.029px;">An odd precise comparison. It's probably better to use a comparison with defined precision:</span>
<span class="t" style="left:246.0px;top:300.50px;font-size:15px;color:#000;letter-spacing:-0.128px;">fabs(timeInSeconds) &gt; Epsilon.</span>
<span class="t" style="left:867.8px;top:290.50px;font-size:15px;color:#000;letter-spacing:-0.207px;">pwdbased.h:179</span>
<div style="left:12px;top:321px;width:978px;height:1px;background:#d4d4d4;"></div>
<div style="left:5px;top:0px;width:1px;height:308px;background:#e6e6e6;"></div>
<div style="left:11px;top:0px;width:1px;height:308px;background:#d4d4d4;"></div>
<div style="left:52px;top:0px;width:1px;height:308px;background:#d4d4d4;"></div>
<div style="left:117px;top:0px;width:1px;height:308px;background:#d4d4d4;"></div>
<div style="left:242px;top:0px;width:1px;height:308px;background:#d4d4d4;"></div>
<div style="left:864px;top:0px;width:1px;height:308px;background:#d4d4d4;"></div>
<div style="left:989px;top:0px;width:1px;height:308px;background:#d4d4d4;"></div>
<div style="left:865px;top:58px;width:124px;height:48px;background:#fff;border:1px solid #7a7a7a;box-sizing:border-box;"></div>
<div style="left:867px;top:60px;width:120px;height:22px;background:#cce8ff;border:1px solid #99d1ff;box-sizing:border-box;"></div>
<span class="t" style="left:870.2px;top:61.50px;font-size:15px;color:#000;letter-spacing:-0.426px;">rsa.cpp:236</span>
<span class="t" style="left:870.2px;top:83.60px;font-size:15px;color:#000;letter-spacing:-0.140px;">nbtheory.h:98</span>
<div style="left:0px;top:0px;width:990px;height:30.5px;background:#fff;"></div>
<div style="left:0px;top:0px;width:1px;height:308px;background:#a0a0a0;"></div>
<div style="left:5px;top:0px;width:1px;height:30.5px;background:#e6e6e6;"></div>
<div style="left:11px;top:0px;width:1px;height:30.5px;background:#d4d4d4;"></div>
<div style="left:52px;top:0px;width:1px;height:30.5px;background:#d4d4d4;"></div>
<div style="left:117px;top:0px;width:1px;height:30.5px;background:#d4d4d4;"></div>
<div style="left:242px;top:0px;width:1px;height:30.5px;background:#d4d4d4;"></div>
<div style="left:864px;top:0px;width:1px;height:30.5px;background:#d4d4d4;"></div>
<div style="left:989px;top:0px;width:1px;height:30.5px;background:#d4d4d4;"></div>
<svg style="left:28px;top:1.5px;" width="10" height="6" viewBox="0 0 10 6"><path d="M0.300 5L4.500 0.800L8.700 5" stroke="#555" stroke-width="0.900" fill="none"/></svg>
<svg style="left:21.900000000000006px;top:7.100000000000023px;" width="18" height="18" viewBox="0 0 18 18"><polygon points="9.00,3.10 10.69,7.97 15.85,8.08 11.74,11.19 13.23,16.12 9.00,13.18 4.77,16.12 6.26,11.19 2.15,8.08 7.31,7.97" fill="#ffa000" stroke="#ffa000" stroke-width="0.6" stroke-linejoin="miter"/></svg>
<span class="t" style="left:68.0px;top:7.00px;font-size:15px;color:#000;font-weight:700;letter-spacing:-0.625px;">Code</span>
<span class="t" style="left:164.2px;top:7.00px;font-size:15px;color:#000;font-weight:700;letter-spacing:-0.967px;">CWE</span>
<span class="t" style="left:523.4px;top:7.00px;font-size:15px;color:#000;font-weight:700;letter-spacing:-0.354px;">Message</span>
<span class="t" style="left:899.0px;top:7.00px;font-size:15px;color:#000;font-weight:700;letter-spacing:-0.221px;">Position</span>
</div>
<div style="left:1189px;top:459px;width:22px;height:308px;background:#f0f0f0;"></div>
<div style="left:1191px;top:487px;width:19px;height:22px;background:#cdcdcd;"></div>
<svg style="left:1195px;top:467px;" width="12" height="8" viewBox="0 0 12 8"><path d="M1.500 6.800L6 2.300L10.500 6.800" stroke="#505050" stroke-width="2" fill="none"/></svg>
<svg style="left:1195px;top:752px;" width="12" height="8" viewBox="0 0 12 8"><path d="M1.500 1.500L6 6L10.500 1.500" stroke="#505050" stroke-width="2" fill="none"/></svg>
<div style="left:40px;top:767px;width:1171px;height:1px;background:#8c8b8b;"></div>
<div style="left:40px;top:768px;width:1171px;height:1px;background:#bdbcbc;"></div>
<div style="left:40px;top:769px;width:1171px;height:25px;background:#d1d0d0;"></div>
<div style="left:42px;top:771px;width:22px;height:21px;background:#fff;"></div>
<svg style="left:47px;top:776px;" width="11" height="11" viewBox="0 0 11 11"><rect x="0.500" y="0.500" width="10" height="10" fill="#fff" stroke="#4d4d4d"/><rect x="0.500" y="0.500" width="4.500" height="10" fill="#4d4d4d"/></svg>
<div style="left:72px;top:771px;width:202px;height:21px;background:#fff;"></div>
<svg style="left:78px;top:775px;" width="16" height="15" viewBox="0 0 16 15"><circle cx="8.500" cy="5.500" r="4.300" fill="none" stroke="#666" stroke-width="1.300"/><path d="M5.500 8.800L1 13.500" stroke="#666" stroke-width="1.700"/><path d="M11 11.500H15.500L13.200 14Z" fill="#666"/></svg>
<span class="t" style="left:100.0px;top:772.40px;font-size:15px;color:#8e8e8e;letter-spacing:-0.108px;">Type to locate (Ctrl...</span>
<div style="left:276px;top:771px;width:1px;height:21px;background:#b0afaf;"></div>
<div style="left:706px;top:771px;width:96px;height:21px;background:#fff;"></div>
<span class="t" style="left:285.8px;top:772.40px;font-size:15px;color:#000;letter-spacing:-1.844px;">1</span>
<span class="t" style="left:299.5px;top:772.40px;font-size:15px;color:#000;letter-spacing:-0.843px;">Issues</span>
<span class="t" style="left:354.1px;top:772.40px;font-size:15px;color:#000;letter-spacing:-0.944px;">2</span>
<span class="t" style="left:369.0px;top:772.40px;font-size:15px;color:#000;letter-spacing:-0.667px;">Search Res...</span>
<span class="t" style="left:472.5px;top:772.40px;font-size:15px;color:#000;letter-spacing:-0.944px;">3</span>
<span class="t" style="left:487.3px;top:772.40px;font-size:15px;color:#000;letter-spacing:0.122px;">Application...</span>
<span class="t" style="left:590.5px;top:772.40px;font-size:15px;color:#000;letter-spacing:0.056px;">4</span>
<span class="t" style="left:606.0px;top:772.40px;font-size:15px;color:#000;letter-spacing:-0.113px;">Compile O...</span>
<span class="t" style="left:709.5px;top:772.40px;font-size:15px;color:#000;letter-spacing:-1.344px;">5</span>
<span class="t" style="left:724.1px;top:772.40px;font-size:15px;color:#000;letter-spacing:-0.355px;">PVS-Studio</span>
<span class="t" style="left:814.1px;top:772.40px;font-size:15px;color:#000;letter-spacing:-0.444px;">6</span>
<span class="t" style="left:829.1px;top:772.40px;font-size:15px;color:#000;letter-spacing:-0.217px;">QML Debu...</span>
<span class="t" style="left:932.3px;top:772.40px;font-size:15px;color:#000;letter-spacing:-0.544px;">9</span>
<span class="t" style="left:946.9px;top:772.40px;font-size:15px;color:#000;letter-spacing:-0.425px;">Test Results</span>
<svg style="left:1041px;top:776px;" width="9" height="13" viewBox="0 0 9 13"><path d="M4.500 0L9 5H0Z M4.500 13L9 8H0Z" fill="#4d4d4d"/></svg>
<div style="left:1139px;top:771px;width:23px;height:21px;background:#fff;"></div>
<svg style="left:1143px;top:774px;" width="15" height="12" viewBox="0 0 15 12"><rect x="0.500" y="7.300" width="14" height="3.400" rx="1.700" fill="#fff" stroke="#4d4d4d" stroke-width="0.900"/><rect x="1" y="7.800" width="8" height="2.400" rx="1.200" fill="#9a9a9a"/><path d="M9.500 3H13.500L11.500 0.800Z" fill="#4d4d4d"/></svg>
<svg style="left:1174px;top:776px;" width="12" height="11" viewBox="0 0 12 11"><rect x="0.500" y="0.500" width="11" height="10" fill="#d8d8d8" stroke="#4d4d4d"/><rect x="6.500" y="0.500" width="5" height="10" fill="#4d4d4d"/></svg>
<div style="left:0px;top:0px;width:1213px;height:1px;background:#101010;"></div>
<div style="left:0px;top:0px;width:1px;height:795px;background:#101010;"></div>
<div style="left:1211px;top:0px;width:1px;height:795px;background:rgba(0,0,0,0.22);"></div>
<div style="left:1212px;top:0px;width:1px;height:795px;background:#1a1a1a;"></div>
<div style="left:0px;top:793px;width:1213px;height:1px;background:#9a9999;"></div>
<div style="left:0px;top:794px;width:1213px;height:1px;background:#1a1a1a;"></div>
</div></body></html>
